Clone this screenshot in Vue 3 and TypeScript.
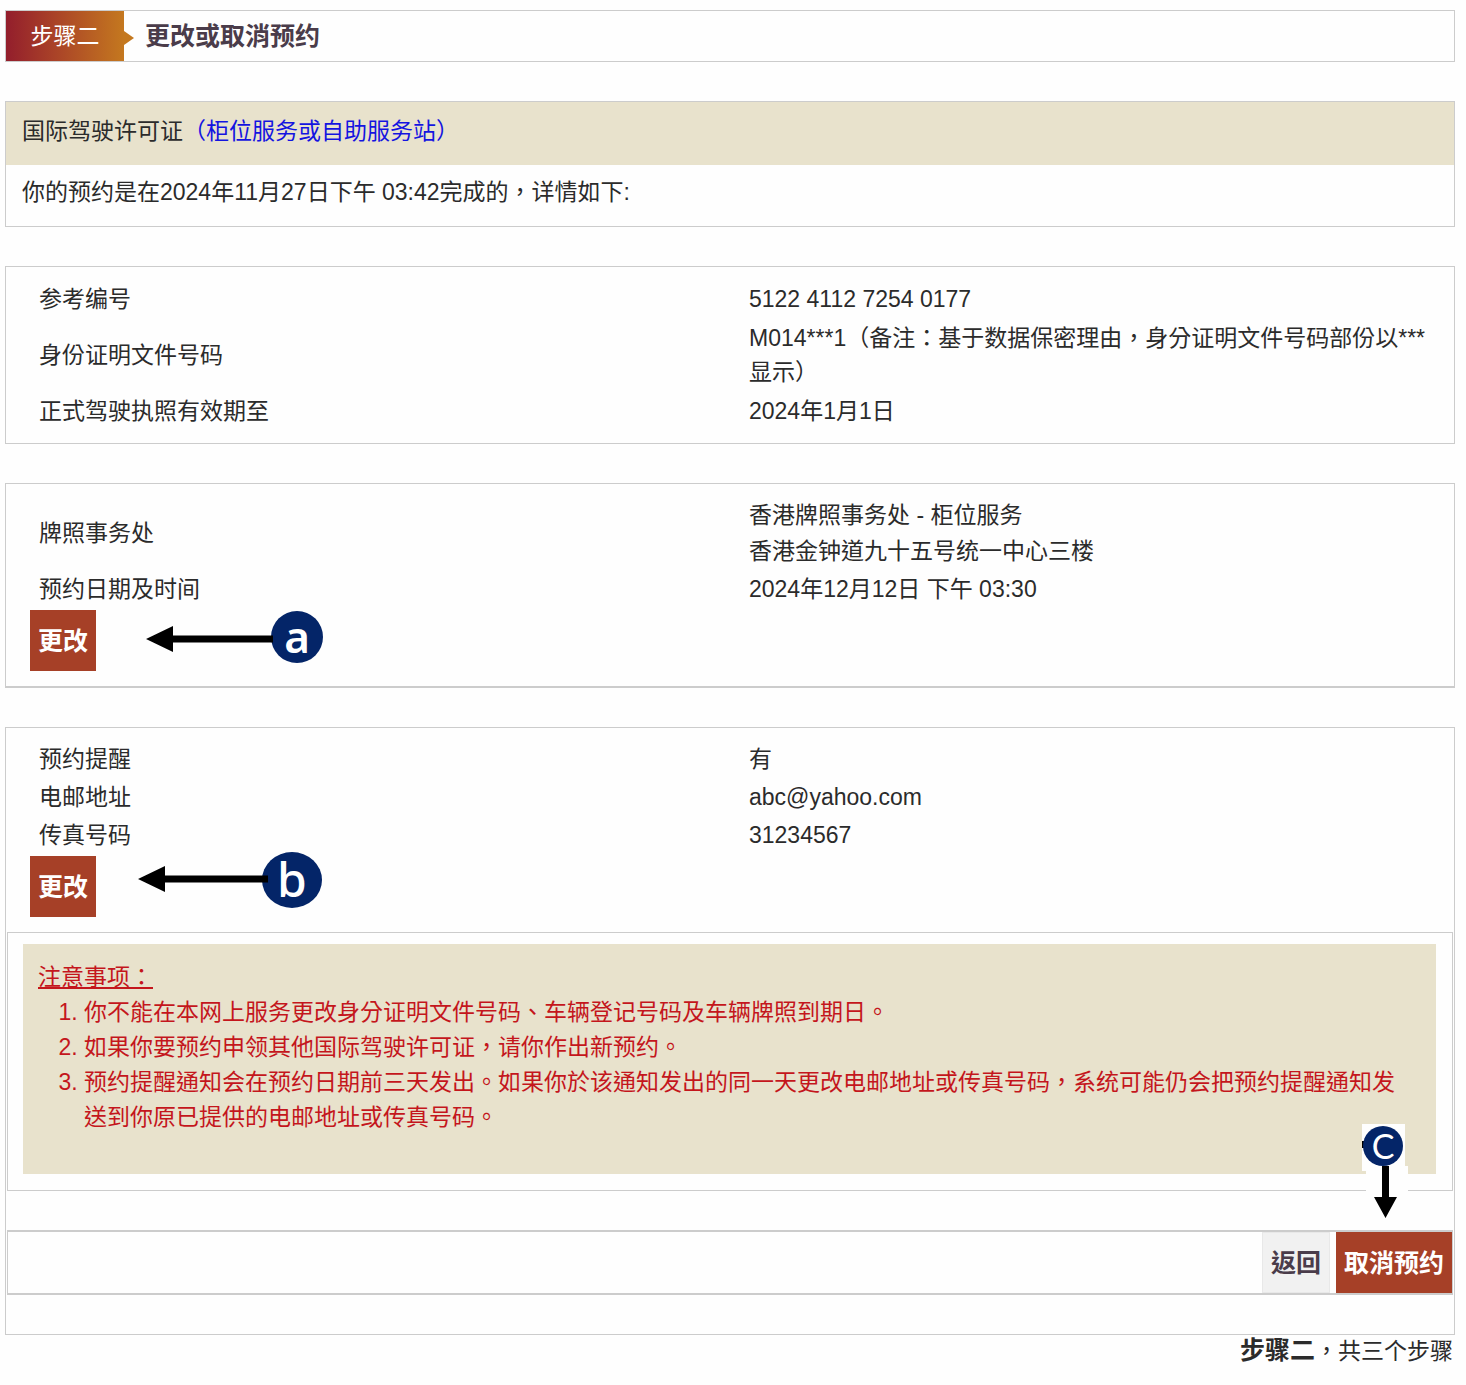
<script setup lang="ts">
interface Row {
  label: string
  lines: string[]
}

const applicant: Row[] = [
  { label: '参考编号', lines: ['5122 4112 7254 0177'] },
  { label: '身份证明文件号码', lines: ['M014***1（备注：基于数据保密理由，身分证明文件号码部份以***显示）'] },
  { label: '正式驾驶执照有效期至', lines: ['2024年1月1日'] },
]

const appointment: Row[] = [
  { label: '牌照事务处', lines: ['香港牌照事务处 - 柜位服务', '香港金钟道九十五号统一中心三楼'] },
  { label: '预约日期及时间', lines: ['2024年12月12日 下午 03:30'] },
]

const reminder: Row[] = [
  { label: '预约提醒', lines: ['有'] },
  { label: '电邮地址', lines: ['abc@yahoo.com'] },
  { label: '传真号码', lines: ['31234567'] },
]

const notes: string[] = [
  '你不能在本网上服务更改身分证明文件号码、车辆登记号码及车辆牌照到期日。',
  '如果你要预约申领其他国际驾驶许可证，请你作出新预约。',
  '预约提醒通知会在预约日期前三天发出。如果你於该通知发出的同一天更改电邮地址或传真号码，系统可能仍会把预约提醒通知发送到你原已提供的电邮地址或传真号码。',
]
</script>

<template>
  <main class="page" lang="zh-Hant">
    <header class="step">
      <span class="step-tag">步骤二</span>
      <h1>更改或取消预约</h1>
    </header>

    <section class="box">
      <h2 class="service">国际驾驶许可证<span class="service-type">（柜位服务或自助服务站）</span></h2>
      <p class="intro">你的预约是在2024年11月27日下午 03:42完成的，详情如下:</p>
    </section>

    <section class="box details compact">
      <table class="spaced">
        <tbody>
          <tr v-for="row in applicant" :key="row.label">
            <th scope="row">{{ row.label }}</th>
            <td><div v-for="line in row.lines" :key="line">{{ line }}</div></td>
          </tr>
        </tbody>
      </table>
    </section>

    <section class="box details heavy">
      <table class="roomy">
        <tbody>
          <tr v-for="row in appointment" :key="row.label">
            <th scope="row">{{ row.label }}</th>
            <td><div v-for="line in row.lines" :key="line">{{ line }}</div></td>
          </tr>
        </tbody>
      </table>
      <div class="edit">
        <button type="button" class="btn primary">更改</button>
        <svg class="marker marker-a" width="180" height="56" viewBox="0 0 180 56">
          <circle cx="152" cy="28" r="26" />
          <path d="M1 30 28 17V26.500H128V33.500H28V43Z" />
          <text x="152" y="44" font-size="44" font-weight="600">a</text>
        </svg>
      </div>
    </section>

    <section class="box last">
      <div class="details">
        <table>
          <tbody>
            <tr v-for="row in reminder" :key="row.label">
              <th scope="row">{{ row.label }}</th>
              <td><div v-for="line in row.lines" :key="line">{{ line }}</div></td>
            </tr>
          </tbody>
        </table>
        <div class="edit">
          <button type="button" class="btn primary">更改</button>
          <svg class="marker marker-b" width="188" height="60" viewBox="0 0 188 60">
            <ellipse cx="155" cy="30" rx="30" ry="28" />
            <path d="M1 29 28 16V25.500H131V32.500H28V42Z" />
            <text x="155" y="47" font-size="48" font-weight="500">b</text>
          </svg>
        </div>
      </div>

      <div class="notice-frame">
        <div class="notice">
          <h3>注意事项：</h3>
          <ol>
            <li v-for="note in notes" :key="note">{{ note }}</li>
          </ol>
        </div>
      </div>

      <div class="actions">
        <button type="button" class="btn plain">返回</button>
        <button type="button" class="btn primary">取消预约</button>
        <svg class="marker marker-c" width="46" height="95" viewBox="0 0 46 95">
          <path class="backing" d="M0 0H43V42H46V95H4V47H0Z" />
          <path d="M0 17H4V24H0Z" />
          <circle cx="21" cy="22" r="20" />
          <path d="M20 42H27V73H35L23.500 94 12 73H20Z" />
          <text x="21" y="35" font-size="34">C</text>
        </svg>
      </div>
    </section>

    <p class="progress"><strong>步骤二</strong>，共三个步骤</p>
  </main>
</template>

<style>
body {
  margin: 0;
  background: #fefefe;
}
</style>

<style scoped>
.page {
  padding: 10px 11px 16px 5px;
  color: #2b2b2b;
  font: 23px/34px "Liberation Sans", "Noto Sans CJK TC", sans-serif;
}

h1, h2, h3, p, ol {
  margin: 0;
  font-size: 23px;
  font-weight: 400;
}

.box {
  margin-top: 39px;
  border: 1px solid #ccc;
}

.heavy {
  border-bottom-width: 2px;
}

.step {
  display: flex;
  align-items: stretch;
  height: 50px;
  border: 1px solid #ccc;
  line-height: 50px;
}

.step-tag {
  position: relative;
  width: 118px;
  background: linear-gradient(90deg, #931e2c, #a94128 40%, #c4781f);
  color: #fff;
  text-align: center;
}

.step-tag::after {
  content: "";
  position: absolute;
  top: 20px;
  left: 100%;
  border: solid transparent;
  border-width: 7px 0 7px 10px;
  border-left-color: #c4781f;
}

h1 {
  margin-left: 21px;
  color: #4a3c4a;
  font-size: 25px;
  font-weight: 700;
}

.service {
  padding: 12px 16px 17px;
  background: #e8e2cc;
}

.service-type {
  color: #1414e0;
}

.intro {
  padding: 10px 16px 17px;
}

.details {
  padding: 12px 4px 15px 24px;
}

.compact {
  padding-bottom: 12px;
}

table {
  width: 100%;
  border-spacing: 0;
  table-layout: fixed;
}

.spaced {
  border-spacing: 0 1px;
}

th, td {
  width: 50%;
  padding: 2px 9px;
  font-weight: 400;
  text-align: left;
  vertical-align: middle;
}

.roomy th, .roomy td {
  padding: 1px 9px;
  line-height: 36px;
}

.edit {
  position: relative;
  display: flex;
  margin-top: 2px;
}

.btn {
  height: 61px;
  padding: 0 8px;
  border: 0;
  font: 700 25px/34px "Liberation Sans", "Noto Sans CJK TC", sans-serif;
}

.primary {
  background: #a64027;
  color: #fff;
}

.plain {
  border: 1px solid #e8e8e8;
  background: #f1f1f1;
  color: #4a3c4a;
}

.marker {
  position: absolute;
  overflow: visible;
}

.marker circle, .marker ellipse {
  fill: #042568;
}

.marker text {
  fill: #fff;
  font-family: "Noto Sans", sans-serif;
  text-anchor: middle;
}

.marker .backing {
  fill: #fefefe;
}

.marker-a {
  top: -1px;
  left: 115px;
}

.marker-b {
  top: -6px;
  left: 107px;
}

.marker-c {
  right: 44px;
  bottom: 74px;
}

.marker-c text {
  font-family: Lato, sans-serif;
}

.last {
  padding-bottom: 39px;
}

.notice-frame {
  margin: 0 1px;
  padding: 11px 16px 16px 15px;
  border: 1px solid #ccc;
}

.notice {
  padding: 16px 20px 39px 15px;
  background: #e8e2cc;
  color: #c4161c;
  line-height: 35px;
}

h3 {
  text-decoration: underline;
}

ol {
  padding-left: 46px;
}

.actions {
  position: relative;
  display: flex;
  justify-content: flex-end;
  gap: 6px;
  margin: 39px 1px 0;
  border: 2px solid #ccc;
  border-width: 2px 1px;
}

.progress {
  padding-right: 2px;
  line-height: 30px;
  text-align: right;
}

strong {
  font-size: 25px;
}
</style>
